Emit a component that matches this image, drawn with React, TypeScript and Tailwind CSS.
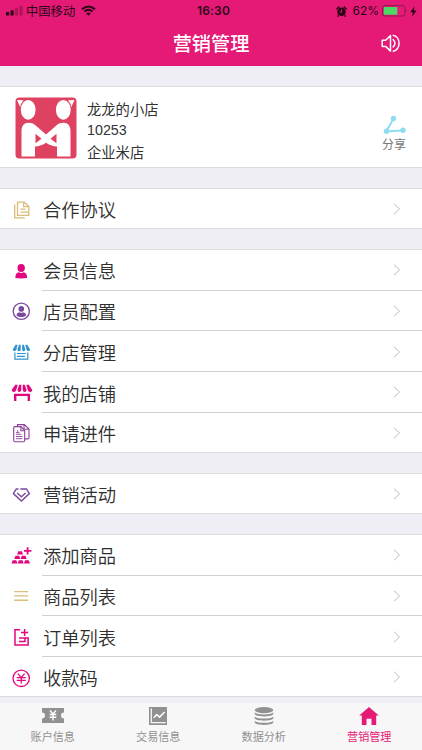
import type { ReactNode } from 'react';

interface MenuItem {
  label: string;
  icon: ReactNode;
}

const PINK = '#e2077f';
const GOLD = '#d9bd78';
const PURPLE = '#7b489f';
const BLUE = '#3093d0';

const AgreementIcon = () => (
  <svg width="20" height="20" viewBox="0 0 20 20" fill="none" stroke={GOLD} strokeWidth="1.3">
    <path d="M3.7 4.6v13.2h10.1M6.5 2.2H13l4.8 4v9.2H6.5z" />
    <path d="M12.6 2.2v4.4h5M9.4 9.2h5.2M9.4 12.1h8" />
  </svg>
);

const MemberIcon = () => (
  <svg width="20" height="20" viewBox="0 0 20 20" fill={PINK}>
    <ellipse cx="10.2" cy="7" rx="3.7" ry="3.9" />
    <path d="M4.4 17.1c0-4 1.5-5.4 3.3-5.8 1.5 1 3.5 1 5 0 1.8.4 3.5 1.8 3.5 5.8q-6 .8-11.8 0z" />
  </svg>
);

const StaffIcon = () => (
  <svg width="20" height="20" viewBox="0 0 20 20">
    <circle cx="10.3" cy="10.3" r="8.1" fill="none" stroke={PURPLE} strokeWidth="1.3" />
    <circle cx="10.3" cy="7.9" r="2.8" fill={PURPLE} />
    <path d="M5.6 14.8c0-2.3 1-3.2 2.7-3.6 1.2.8 2.8.8 4 0 1.7.4 2.7 1.3 2.7 3.6-2.6 1.7-6.8 1.7-9.4 0z" fill={PURPLE} />
  </svg>
);

const BranchIcon = () => (
  <svg width="20" height="20" viewBox="0 0 20 20">
    <path d="M4.6 2.7h2L5.4 7.6q-.6 1.7-2 1.5-1.5-.1-1.6-1.6zM8 2.7h1.7v5q-.2 1.5-1.7 1.5T6.4 7.6zM11.2 2.7h1.7l1.4 4.9q-.2 1.6-1.6 1.6t-1.6-1.5zM14.3 2.7h2l2.8 4.8q-.1 1.5-1.6 1.6-1.4.2-2-1.5z" fill={BLUE} />
    <path d="M3.9 10.6v6.6h12.9v-6.6M5.9 11.5h8.9M5.9 14.4h8" fill="none" stroke={BLUE} strokeWidth="1.2" />
  </svg>
);

const ShopIcon = () => (
  <svg width="22" height="20" viewBox="0 0 22 20">
    <path d="M4.3 1.7h2.4L5.2 7q-.7 2-2.4 1.9Q1 8.7.6 6.9zM8.2 1.7h2.1V7q-.3 1.9-2 1.9T6.4 7zM11.7 1.7h2.1L15.6 7q-.2 1.9-1.9 1.9t-2-1.9zM15.3 1.7h2.4l3.7 5.2q-.4 1.8-2.2 2-1.7.1-2.4-1.9z" fill={PINK} />
    <path d="M4.2 18v-6.1h13.6V18" fill="none" stroke={PINK} strokeWidth="2.4" />
  </svg>
);

const ApplyIcon = () => (
  <svg width="20" height="20" viewBox="0 0 20 20" fill="none" stroke="#8b4097" strokeWidth="1.1">
    <path d="M3.7 3.6H10l3.7 4.1v9.8q0 1.2-1.2 1.2H3.9q-1.2 0-1.2-1.2V4.8q0-1.2 1-1.2z" />
    <path d="M6.5 3.3V1.6h6.8L18 6v8.7q0 1.2-1.2 1.2h-3M9.9 3.7v4h3.7M13 1.8v4.5h4.8" />
    <path d="M5 11.3h5.5M5 13.5h6.4M5 15.7h6.4M5 9.6h3.5M6.7 7v2.4" strokeWidth=".9" />
  </svg>
);

const ActivityIcon = () => (
  <svg width="20" height="20" viewBox="0 0 20 20" fill="none" stroke={PURPLE} strokeWidth="1.4">
    <path d="M7.5 4H5.3L2.4 8.6l8 7.4 8-7.4L15.5 4H9.3" />
    <path d="M6.2 8l4.2 3.7L14.6 8" />
  </svg>
);

const AddGoodsIcon = () => (
  <svg width="22" height="20" viewBox="0 0 22 20" fill={PINK}>
    <path d="M7.3 5.3h3.6l1.2 3.2H6.1zM4.5 9.8h3.7l1.1 3.1h-6zM10.8 9.8h3.7l1.2 3.1h-6zM1.7 14.2h3.6l1.2 3.4H.5zM7.9 14.2h3.6l1.2 3.4h-6zM14.1 14.2h3.6l1.3 3.4h-6.1z" />
    <path d="M16.6 1.2v7.4M12.9 4.9h7.5" stroke={PINK} strokeWidth="1.8" />
  </svg>
);

const GoodsListIcon = () => (
  <svg width="20" height="20" viewBox="0 0 20 20" stroke={GOLD} strokeWidth="1.4">
    <path d="M3.2 5.6h14M3.2 9.9h14M3.2 14.3h14" />
  </svg>
);

const OrderIcon = () => (
  <svg width="20" height="20" viewBox="0 0 20 20" fill="none" stroke={PINK} strokeWidth="1.5">
    <path d="M9.2 2.7H4v15.2h13.1V11H8M13.6 2v7M10 5.5h7.2M8 14.5h6M14 11v4" />
  </svg>
);

const PayCodeIcon = () => (
  <svg width="20" height="20" viewBox="0 0 20 20" fill="none" stroke={PINK} strokeWidth="1.3">
    <circle cx="10.2" cy="10.3" r="8.2" />
    <path d="M6.8 5.6l3.4 4 3.4-4M5.7 9.6h9M5.7 12.4h9M10.2 9.6v6" />
  </svg>
);

const groups: MenuItem[][] = [
  [{ label: '合作协议', icon: <AgreementIcon /> }],
  [
    { label: '会员信息', icon: <MemberIcon /> },
    { label: '店员配置', icon: <StaffIcon /> },
    { label: '分店管理', icon: <BranchIcon /> },
    { label: '我的店铺', icon: <ShopIcon /> },
    { label: '申请进件', icon: <ApplyIcon /> },
  ],
  [{ label: '营销活动', icon: <ActivityIcon /> }],
  [
    { label: '添加商品', icon: <AddGoodsIcon /> },
    { label: '商品列表', icon: <GoodsListIcon /> },
    { label: '订单列表', icon: <OrderIcon /> },
    { label: '收款码', icon: <PayCodeIcon /> },
  ],
];

const tabs = [
  {
    label: '账户信息',
    icon: (
      <svg width="22" height="18" viewBox="0 0 22 18">
        <path d="M0 1h22v4.5a3 3 0 0 0 0 6V16H0v-4.5a3 3 0 0 0 0-6z" fill="#919191" />
        <path d="M8 3.5l3 3.5 3-3.5M7.7 7.5h6.6M7.7 10.2h6.6M11 7v6.5" fill="none" stroke="#fff" strokeWidth="1.4" />
      </svg>
    ),
  },
  {
    label: '交易信息',
    icon: (
      <svg width="20" height="18" viewBox="0 0 20 18" fill="none">
        <path d="M1 0h18v18H1z" fill="#919191" />
        <path d="M3.3 1.5v14.2h14.4" stroke="#f7f7f7" strokeWidth="1.3" />
        <path d="M5.8 10.7l3-3.2 2.8 2.6 5-5.1" stroke="#fff" strokeWidth="1.5" />
      </svg>
    ),
  },
  {
    label: '数据分析',
    icon: (
      <svg width="20" height="18" viewBox="0 0 20 18" fill="#919191">
        <ellipse cx="10" cy="3.1" rx="9.3" ry="3.1" />
        <path d="M.7 5.5c2.5 2.5 16.1 2.5 18.6 0v1.6c-1 3.2-17.6 3.2-18.6 0zM.7 9.7c2.5 2.5 16.1 2.5 18.6 0v1.6c-1 3.2-17.6 3.2-18.6 0zM.7 13.9c2.5 2.5 16.1 2.5 18.6 0v1.6c-1 3.2-17.6 3.2-18.6 0z" />
      </svg>
    ),
  },
  {
    label: '营销管理',
    active: true,
    icon: (
      <svg width="20" height="18" viewBox="0 0 20 18" fill="#e51a76">
        <path d="M10 0l9.8 8.6h-2.6V18h-4.7v-6.3h-5V18H2.8V8.6H.2z" />
      </svg>
    ),
  },
];

function StatusBar() {
  return (
    <div className="grid h-[22px] grid-cols-[1fr_auto_1fr] items-center pl-[6px] pr-[5px] text-[#2b0718]">
      <div className="flex items-center">
        <svg width="17" height="10" viewBox="0 0 17 10" fill="#2b0718">
          <rect x="0" y="6" width="3.2" height="3.5" rx=".6" />
          <rect x="4.5" y="4.2" width="3.2" height="5.3" rx=".6" />
          <rect x="9" y="2" width="3" height="7.5" rx=".6" opacity=".3" />
          <rect x="13.5" y="0" width="3" height="9.5" rx=".6" opacity=".3" />
        </svg>
        <span className="ml-[3px] text-[12.3px] leading-none">中国移动</span>
        <svg className="ml-[6px]" width="15" height="11" viewBox="0 0 15 11" fill="none" stroke="#2b0718">
          <path d="M1 4.2q6.5-5.6 13 0M3.3 6.6q4.2-3.6 8.4 0" strokeWidth="1.9" />
          <path d="M5.1 8.3q2.4-1.7 4.8 0L7.5 10.7z" fill="#2b0718" stroke="none" />
        </svg>
      </div>
      <span className="pl-[4px] font-['Inter','Noto_Sans_CJK_SC',sans-serif] text-[12px] font-semibold leading-none tracking-[0.2px]">16:30</span>
      <div className="flex items-center justify-end">
        <svg width="11" height="11" viewBox="0 0 11 11" fill="#2b0718">
          <circle cx="5.5" cy="5.8" r="4.3" />
          <path d="M.4 3.3L3.2.6M10.6 3.3L7.8.6M2.5 9.3l-1 1.3M8.5 9.3l1 1.3" stroke="#2b0718" strokeWidth="1.5" />
          <path d="M5.5 3.3v2.9H3.6" fill="none" stroke="#e51a76" strokeWidth=".9" />
        </svg>
        <span className="ml-[5px] font-['Inter','Noto_Sans_CJK_SC',sans-serif] text-[12px] leading-none">62%</span>
        <svg className="ml-[3px]" width="26" height="12" viewBox="0 0 26 12">
          <rect x=".5" y=".7" width="22.5" height="10.3" rx="2" fill="none" stroke="#8d1750" />
          <rect x="1.8" y="2" width="13.5" height="7.7" rx=".5" fill="#4cd964" />
          <path d="M24.2 4q1.4 1.9 0 3.8z" fill="#8d1750" />
        </svg>
        <svg className="ml-[2px]" width="7" height="11" viewBox="0 0 7 11" fill="#2b0718">
          <path d="M4.6.3L.3 6.2h2.6L2 10.7l4.6-6.2H3.9z" />
        </svg>
      </div>
    </div>
  );
}

function Header() {
  return (
    <header className="h-[66px] shrink-0 bg-[#e51a76]">
      <StatusBar />
      <div className="grid h-[43px] grid-cols-[1fr_auto_1fr] items-center">
        <h1 className="col-start-2 text-[19.2px] font-medium leading-none text-white">营销管理</h1>
        <svg className="mr-[21px] justify-self-end" width="20" height="20" viewBox="0 0 20 20" fill="none" stroke="#fff" strokeWidth="1.5">
          <path d="M1.2 6.3h3.5L9.5 1.5v15.6l-4.8-4.7H1.2z" strokeLinejoin="round" />
          <path d="M11.7 5.2q4.6 4.1 0 8.2M11.7 1.2c8.5 1.5 8.5 14.7 0 16.2" />
        </svg>
      </div>
    </header>
  );
}

function ShopLogo() {
  return (
    <svg className="mt-[2px]" width="62" height="62" viewBox="0 0 62 62">
      <rect x=".5" y=".5" width="61" height="61" rx="4" fill="#df4261" />
      <g fill="#fff">
        <path d="M2 3l6.5.3q-3 3-3.2 7zM59.5 3l-6.5.3q3 3 3.2 7z" />
        <ellipse cx="13.2" cy="12.8" rx="7.4" ry="9.9" />
        <ellipse cx="48.3" cy="12.8" rx="7.4" ry="9.9" />
        <path d="M6.5 59.5V34c0-5 2.5-8.2 7-8.2 3.5 0 5.5 1.2 7.5 3l10 8.7 10-8.7c2-1.8 4-3 7.5-3 4.5 0 7 3.2 7 8.2v25.5H42V49.5c-3.500 0-7-1.200-11-3.800-4 2.600-7.500 3.800-11 3.800v10z" />
      </g>
      <path d="M20.5 36.8v9.4l6-4.5zM41.5 36.8v9.4l-6-4.5z" fill="#df4261" />
    </svg>
  );
}

function ProfileCard() {
  return (
    <section className="mt-[20px] flex h-[82px] items-center border-y border-[#dcdcdf] bg-white pl-[15px] pr-[16px]">
      <ShopLogo />
      <div className="ml-[10px] flex-1 pt-[6px] text-[14.3px] leading-[21.5px] text-[#333]">
        <p>龙龙的小店</p>
        <p className="pt-[2px] font-['Liberation_Sans','Noto_Sans_CJK_SC',sans-serif] leading-[19.5px]">10253</p>
        <p>企业米店</p>
      </div>
      <div className="flex flex-col items-center pt-[12px] text-[12px] leading-[16px] text-[#777]">
        <svg className="mb-[1px]" width="24" height="20" viewBox="0 0 24 20" fill="#8fdcf1">
          <path d="M11.3 4L4.3 16.5l17-1" fill="none" stroke="#8fdcf1" strokeWidth="2" />
          <circle cx="11.5" cy="3.5" r="2.7" />
          <circle cx="4.5" cy="16.3" r="2.7" />
          <circle cx="21" cy="15.3" r="2.7" />
        </svg>
        分享
      </div>
    </section>
  );
}

function MenuGroup({ items }: { items: MenuItem[] }) {
  return (
    <section className="mt-[19.75px] border-y border-[#dcdcdf] bg-white">
      {items.map((item, i) => (
        <div key={item.label} className="flex h-[40.75px] pl-[11px] first:h-[39.75px] last:h-[40.25px] only:h-[39.25px]">
          <span className="flex w-[31px] shrink-0 items-center pt-[3px]">{item.icon}</span>
          <div className={`flex flex-1 items-center justify-between pl-[1px] pr-[21px] ${i > 0 ? 'border-t border-[#d2d2d4]' : ''}`}>
            <span className="pt-[2px] text-[18.3px] font-[350] leading-none text-[#2e2e2e]">{item.label}</span>
            <svg className="mt-[1px]" width="8" height="12" viewBox="0 0 8 12" fill="none" stroke="#b9b9bd" strokeWidth="1">
              <path d="M1 .7L6.5 6 1 11.3" />
            </svg>
          </div>
        </div>
      ))}
    </section>
  );
}

function TabBar() {
  return (
    <nav className="grid h-[47px] shrink-0 grid-cols-4 bg-[#f7f7f7]">
      {tabs.map((tab) => (
        <div key={tab.label} className={`flex flex-col items-center pt-[4px] text-[11.1px] leading-[16px] ${tab.active ? 'text-[#e51a76]' : 'text-[#919191]'}`}>
          {tab.icon}
          <span className="mt-[3px]">{tab.label}</span>
        </div>
      ))}
    </nav>
  );
}

export default function App() {
  return (
    <div className="flex h-[750px] w-[422px] flex-col overflow-hidden bg-[#efeef5] font-['Noto_Sans_CJK_SC',sans-serif]">
      <Header />
      <main className="min-h-0 flex-1 overflow-hidden">
        <ProfileCard />
        {groups.map((items) => (
          <MenuGroup key={items[0].label} items={items} />
        ))}
      </main>
      <TabBar />
    </div>
  );
}
